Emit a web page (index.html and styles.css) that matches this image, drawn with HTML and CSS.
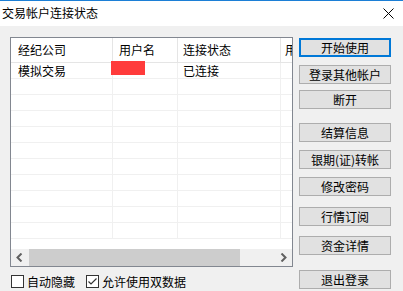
FILE: index.html
```html
<!DOCTYPE html>
<html lang="zh-CN">
<head>
    <meta charset="UTF-8" />
    <meta name="viewport" content="width=device-width, initial-scale=1.0" />
    <title>交易帐户连接状态</title>
    <link rel="stylesheet" href="styles.css">
</head>
<body>
    <div class="window">
        <div class="titlebar">
            <span class="title">交易帐户连接状态</span>
            <svg class="close" width="11" height="11" viewBox="0 0 11 11">
                <path d="M0.5 0.5 L10.5 10.5 M10.5 0.5 L0.5 10.5" stroke="#000" stroke-width="1" fill="none" />
            </svg>
        </div>
        <div class="body">
            <div class="main">
                <div class="listview">
                    <div class="list-rows">
                        <div class="row header">
                            <div class="cell c1">经纪公司</div>
                            <div class="cell c2">用户名</div>
                            <div class="cell c3">连接状态</div>
                            <div class="cell c4">用户</div>
                        </div>
                        <div class="row">
                            <div class="cell c1">模拟交易</div>
                            <div class="cell c2"></div>
                            <div class="cell c3">已连接</div>
                            <div class="cell c4"></div>
                        </div>
                        <div class="row"><div class="cell c1"></div><div class="cell c2"></div><div class="cell c3"></div><div class="cell c4"></div></div>
                        <div class="row"><div class="cell c1"></div><div class="cell c2"></div><div class="cell c3"></div><div class="cell c4"></div></div>
                        <div class="row"><div class="cell c1"></div><div class="cell c2"></div><div class="cell c3"></div><div class="cell c4"></div></div>
                        <div class="row"><div class="cell c1"></div><div class="cell c2"></div><div class="cell c3"></div><div class="cell c4"></div></div>
                        <div class="row"><div class="cell c1"></div><div class="cell c2"></div><div class="cell c3"></div><div class="cell c4"></div></div>
                        <div class="row"><div class="cell c1"></div><div class="cell c2"></div><div class="cell c3"></div><div class="cell c4"></div></div>
                        <div class="row"><div class="cell c1"></div><div class="cell c2"></div><div class="cell c3"></div><div class="cell c4"></div></div>
                        <div class="row"><div class="cell c1"></div><div class="cell c2"></div><div class="cell c3"></div><div class="cell c4"></div></div>
                        <div class="row"><div class="cell c1"></div><div class="cell c2"></div><div class="cell c3"></div><div class="cell c4"></div></div>
                        <div class="row"><div class="cell c1"></div><div class="cell c2"></div><div class="cell c3"></div><div class="cell c4"></div></div>
                        <div class="redact"></div>
                    </div>
                    <div class="hscroll">
                        <div class="arrow">
                            <svg width="7" height="9" viewBox="0 0 7 9"><path d="M5.5 0.5 L1.5 4.5 L5.5 8.5" stroke="#606060" stroke-width="2" fill="none" /></svg>
                        </div>
                        <div class="track"><div class="thumb"></div></div>
                        <div class="arrow">
                            <svg width="7" height="9" viewBox="0 0 7 9"><path d="M1.5 0.5 L5.5 4.5 L1.5 8.5" stroke="#606060" stroke-width="2" fill="none" /></svg>
                        </div>
                    </div>
                </div>
                <div class="options">
                    <label class="check"><span class="box"></span>自动隐藏</label>
                    <label class="check checked">
                        <span class="box">
                            <svg width="11" height="11" viewBox="0 0 11 11"><path d="M1.5 5.5 L4 8 L9.5 2.5" stroke="#333" stroke-width="1.2" fill="none" /></svg>
                        </span>允许使用双数据</label>
                </div>
            </div>
            <div class="buttons">
                <button class="btn default">开始使用</button>
                <button class="btn gap-8">登录其他帐户</button>
                <button class="btn gap-6">断开</button>
                <button class="btn gap-14">结算信息</button>
                <button class="btn gap-8">银期(证)转帐</button>
                <button class="btn gap-8">修改密码</button>
                <button class="btn gap-11">行情订阅</button>
                <button class="btn gap-10">资金详情</button>
                <button class="btn gap-15">退出登录</button>
            </div>
        </div>
    </div>
</body>
</html>
```

FILE: styles.css
```css
:root {
    --face: #f0f0f0;
    --btn-face: #e1e1e1;
    --btn-border: #adadad;
    --accent: #0078d7;
    --grid: #f0f0f0;
}

* {
    box-sizing: border-box;
}

body {
    margin: 0;
    font-family: "Noto Sans CJK SC", "Noto Sans", sans-serif;
    font-size: 12px;
    color: #000;
    background-color: var(--face);
}

.window {
    width: 403px;
    height: 291px;
    overflow: hidden;
    border-top: 1px solid #1c7fd6;
    background-color: var(--face);
}

.titlebar {
    height: 25px;
    background-color: white;
    display: flex;
    align-items: center;
    justify-content: space-between;
    padding: 0 9px 0 2px;
}

.title {
    font-size: 12px;
    line-height: 16px;
    margin-top: -2px;
}

.close {
    display: block;
    margin-top: -1px;
}

.body {
    display: flex;
    padding-left: 10px;
}

.main {
    width: 283px;
    padding-top: 11px;
}

.listview {
    height: 230px;
    border: 1px solid #828790;
    background-color: white;
    display: flex;
    flex-direction: column;
}

.list-rows {
    position: relative;
    flex: 1;
    overflow: hidden;
}

.row {
    display: flex;
    height: 16px;
    border-bottom: 1px solid var(--grid);
}

.row.header {
    height: 25px;
    border-bottom: 1px solid #e5e5e5;
}

.cell {
    flex: none;
    border-right: 1px solid var(--grid);
    padding-left: 6px;
    white-space: nowrap;
    overflow: hidden;
    line-height: 15px;
}

.header .cell {
    border-right-color: #e5e5e5;
    line-height: 24px;
}

.c1 {
    width: 102px;
    padding-left: 7px;
}

.c2 {
    width: 65px;
}

.c3 {
    width: 103px;
    padding-left: 5px;
}

.c4 {
    width: 60px;
    padding-left: 4px;
}

/* masked user name */
.redact {
    position: absolute;
    left: 100px;
    top: 23px;
    width: 34px;
    height: 14px;
    background-color: #ff3b3b;
}

.hscroll {
    height: 17px;
    display: flex;
    background-color: var(--face);
}

.arrow {
    width: 17px;
    display: flex;
    align-items: center;
    justify-content: center;
}

.track {
    flex: 1;
    padding: 0 35px 0 1px;
}

.thumb {
    height: 100%;
    background-color: #cdcdcd;
}

.options {
    display: flex;
    align-items: center;
    height: 20px;
    margin-top: 4px;
}

.check {
    display: flex;
    align-items: center;
    margin-left: 1px;
    margin-right: 10px;
}

.box {
    width: 13px;
    height: 13px;
    border: 1px solid #333;
    background-color: white;
    margin-right: 3px;
    display: flex;
    align-items: center;
    justify-content: center;
}

.buttons {
    display: flex;
    flex-direction: column;
    width: 92px;
    margin-left: 6px;
    padding-top: 12px;
}

.btn {
    height: 19px;
    padding: 0;
    font-family: inherit;
    font-size: 12px;
    line-height: 17px;
    color: #000;
    background-color: var(--btn-face);
    border: 1px solid var(--btn-border);
}

.btn.default {
    border: 2px solid var(--accent);
    line-height: 15px;
}

.gap-6 { margin-top: 6px; }
.gap-8 { margin-top: 8px; }
.gap-10 { margin-top: 10px; }
.gap-11 { margin-top: 11px; }
.gap-14 { margin-top: 14px; }
.gap-15 { margin-top: 15px; }
```
